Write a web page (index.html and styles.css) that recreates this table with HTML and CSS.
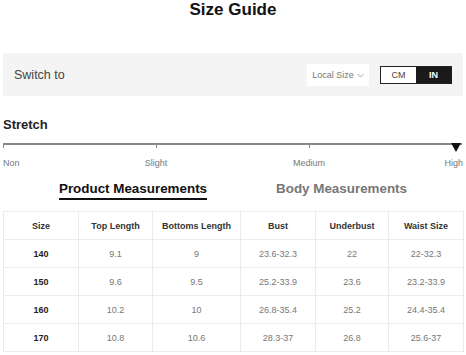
FILE: index.html
```html
<!DOCTYPE html>
<html>
<head>
<meta charset="utf-8">
<link rel="stylesheet" href="styles.css">
</head>
<body>
<div class="page">
  <h1 class="title">Size Guide</h1>
  <div class="switchbar">
    <span class="switch-label">Switch to</span>
    <div class="controls">
      <div class="dropdown">Local Size <svg class="chev" width="7" height="5" viewBox="0 0 7 5"><path d="M0.5 1 L3.5 4 L6.5 1" fill="none" stroke="#999" stroke-width="0.9"/></svg></div>
      <div class="toggle">
        <span class="opt">CM</span>
        <span class="opt active">IN</span>
      </div>
    </div>
  </div>
  <div class="stretch-title">Stretch</div>
  <div class="scale">
    <div class="scale-line">
      <span class="tick t0"></span>
      <span class="tick t1"></span>
      <span class="tick t2"></span>
      <span class="marker"></span>
    </div>
    <div class="scale-labels">
      <span class="lbl l0">Non</span>
      <span class="lbl l1">Slight</span>
      <span class="lbl l2">Medium</span>
      <span class="lbl l3">High</span>
    </div>
  </div>
  <div class="tabs">
    <span class="tab active">Product Measurements</span>
    <span class="tab">Body Measurements</span>
  </div>
  <table class="sizes">
    <colgroup>
      <col style="width:75px"><col style="width:74px"><col style="width:88px"><col style="width:75px"><col style="width:73px"><col style="width:75px">
    </colgroup>
    <thead>
      <tr><th>Size</th><th>Top Length</th><th>Bottoms Length</th><th>Bust</th><th>Underbust</th><th>Waist Size</th></tr>
    </thead>
    <tbody>
      <tr><th>140</th><td>9.1</td><td>9</td><td>23.6-32.3</td><td>22</td><td>22-32.3</td></tr>
      <tr><th>150</th><td>9.6</td><td>9.5</td><td>25.2-33.9</td><td>23.6</td><td>23.2-33.9</td></tr>
      <tr><th>160</th><td>10.2</td><td>10</td><td>26.8-35.4</td><td>25.2</td><td>24.4-35.4</td></tr>
      <tr><th>170</th><td>10.8</td><td>10.6</td><td>28.3-37</td><td>26.8</td><td>25.6-37</td></tr>
    </tbody>
  </table>
</div>
</body>
</html>
```
FILE: styles.css
```css
* { box-sizing: border-box; }
html, body { margin: 0; padding: 0; background: #fff; }
body { font-family: "Liberation Sans", Arial, sans-serif; color: #222; }
.page { width: 466px; padding: 0 3px; }
.title {
  margin: 0;
  height: 20px;
  line-height: 20px;
  font-size: 17px;
  font-weight: bold;
  text-align: center;
  color: #111;
}
.switchbar {
  margin-top: 33px;
  height: 43px;
  background: #f4f4f4;
  display: flex;
  align-items: center;
  justify-content: space-between;
  padding: 0 11px;
}
.switch-label { font-size: 12.5px; color: #444; }
.controls { display: flex; align-items: center; gap: 11px; }
.dropdown {
  width: 62px;
  height: 22px;
  background: #fff;
  font-size: 9px;
  color: #777;
  display: flex;
  align-items: center;
  justify-content: center;
  gap: 3px;
}
.chev { margin-top: 1px; }
.toggle {
  display: flex;
  width: 72px;
  height: 18px;
  border: 1px solid #222;
}
.opt {
  flex: 1;
  display: flex;
  align-items: center;
  justify-content: center;
  font-size: 9px;
  color: #444;
  background: #fff;
}
.opt.active { background: #1a1a1a; color: #fff; font-weight: bold; }
.stretch-title {
  margin-top: 21px;
  height: 16px;
  line-height: 16px;
  font-size: 13px;
  font-weight: bold;
  color: #222;
}
.scale { margin-top: 10px; position: relative; }
.scale-line {
  position: relative;
  height: 2px;
  background: #888;
  width: 459px;
}
.tick { position: absolute; top: 0; width: 1px; height: 5px; background: #888; }
.t0 { left: 0; }
.t1 { left: 153px; }
.t2 { left: 306px; }
.marker {
  position: absolute;
  right: 1px;
  top: 0;
  width: 0; height: 0;
  border-left: 5px solid transparent;
  border-right: 5px solid transparent;
  border-top: 9px solid #111;
}
.scale-labels {
  position: relative;
  height: 32px;
  font-size: 9px;
  color: #777;
}
.lbl { position: absolute; top: 12px; line-height: 12px; }
.l0 { left: 0; }
.l1 { left: 153px; transform: translateX(-50%); }
.l2 { left: 306px; transform: translateX(-50%); }
.l3 { right: 0; }
.tabs {
  display: flex;
  justify-content: center;
  gap: 69px;
  height: 30px;
  margin-top: 4px;
}
.tab {
  font-size: 13.4px;
  font-weight: bold;
  color: #777;
  height: 19px;
  line-height: 16px;
}
.tab.active { color: #111; border-bottom: 2px solid #111; }
.sizes {
  border-collapse: collapse;
  table-layout: fixed;
  width: 460px;
  margin-top: 0;
  font-size: 9px;
}
.sizes th, .sizes td {
  border: 1px solid #ebebeb;
  height: 28px;
  text-align: center;
  padding: 0;
}
.sizes thead th { color: #333; font-weight: bold; }
.sizes tbody th { color: #222; font-weight: bold; }
.sizes td { color: #777; }
```
